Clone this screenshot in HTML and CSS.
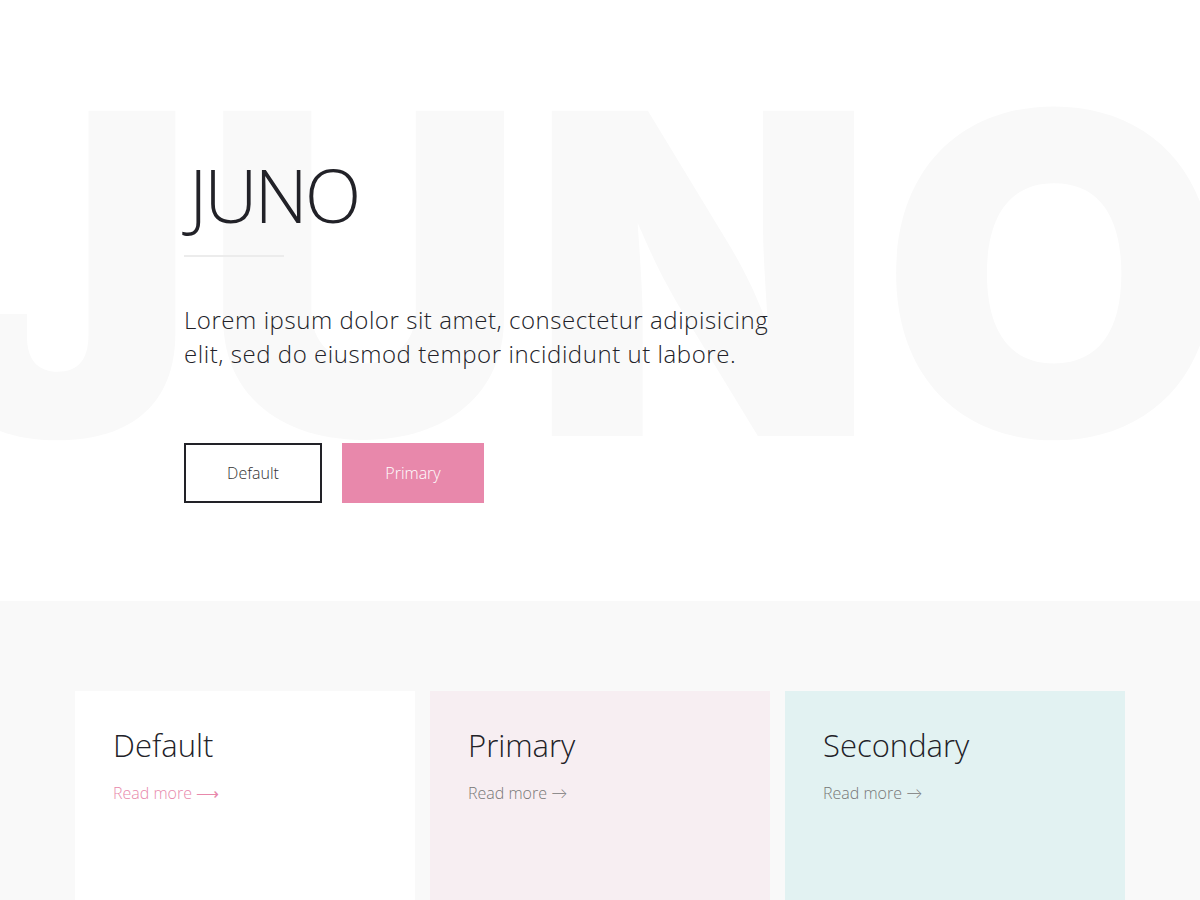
FILE: index.html
```html
<!DOCTYPE html>
<html lang="en">
<head>
<meta charset="utf-8">
<title>Juno</title>
<link rel="stylesheet" href="styles.css">
</head>
<body>
<section class="hero">
  <div class="hero-bg" aria-hidden="true">JUNO</div>
  <div class="hero-inner">
    <h1 class="hero-title">JUNO</h1>
    <hr class="hero-rule">
    <p class="hero-text">Lorem ipsum dolor sit amet, consectetur adipisicing elit, sed do eiusmod tempor incididunt ut labore.</p>
    <div class="hero-actions">
      <a class="btn btn-default" href="#">Default</a>
      <a class="btn btn-primary" href="#">Primary</a>
    </div>
  </div>
</section>
<section class="cards">
  <div class="cards-grid">
    <div class="card card-default">
      <h2 class="card-title">Default</h2>
      <a class="card-link" href="#">Read more <span class="arrow">&#x27F6;</span></a>
    </div>
    <div class="card card-primary">
      <h2 class="card-title">Primary</h2>
      <a class="card-link" href="#">Read more <span class="arrow">&rarr;</span></a>
    </div>
    <div class="card card-secondary">
      <h2 class="card-title">Secondary</h2>
      <a class="card-link" href="#">Read more <span class="arrow">&rarr;</span></a>
    </div>
  </div>
</section>
</body>
</html>
```
FILE: styles.css
```css
html, body {
  margin: 0;
  padding: 0;
}
body {
  font-family: "Open Sans", "Lato", sans-serif;
  font-weight: 300;
  color: #222228;
  background: #fff;
  overflow: hidden;
}
.hero {
  position: relative;
  height: 601px;
  overflow: hidden;
}
.hero-bg {
  position: absolute;
  left: -70px;
  top: 50px;
  font-family: "Inter", "Noto Sans", sans-serif;
  font-size: 447px;
  font-weight: 900;
  line-height: 1;
  color: #f9f9f9;
  white-space: nowrap;
  letter-spacing: 6px;
  z-index: 0;
}
.hero-inner {
  position: relative;
  z-index: 1;
  width: 832px;
  margin: 0 auto;
  padding-top: 150px;
}
.hero-title {
  margin: 0;
  font-size: 74px;
  font-weight: 300;
  line-height: 90px;
  letter-spacing: -3px;
  padding-left: 5px;
}
.hero-rule {
  width: 100px;
  height: 2px;
  border: 0;
  background: #ececec;
  margin: 15px 0 0 0;
}
.hero-text {
  margin: 46px 0 0 0;
  max-width: 600px;
  font-size: 24px;
  letter-spacing: 0.55px;
  line-height: 34px;
}
.hero-actions {
  display: flex;
  gap: 20px;
  margin-top: 72px;
}
.btn {
  display: flex;
  align-items: center;
  justify-content: center;
  height: 60px;
  box-sizing: border-box;
  font-size: 16px;
  text-decoration: none;
}
.btn-default {
  width: 138px;
  border: 2px solid #222228;
  color: #333;
}
.btn-primary {
  width: 142px;
  background: #e888ab;
  color: #fff;
}
.cards {
  background: #f9f9f9;
  height: 299px;
  padding-top: 90px;
  box-sizing: border-box;
}
.cards-grid {
  display: grid;
  grid-template-columns: repeat(3, 340px);
  gap: 15px;
  justify-content: center;
}
.card {
  height: 260px;
  padding: 34px 38px;
  box-sizing: border-box;
}
.card-default { background: #fff; }
.card-primary { background: #f7eef2; }
.card-secondary { background: #e2f2f2; }
.card-title {
  margin: 0;
  font-size: 31px;
  font-weight: 300;
  line-height: 40px;
}
.card-link {
  display: inline-block;
  margin-top: 17px;
  font-size: 16px;
  text-decoration: none;
  color: #777;
}
.card-default .card-link { color: #e888ab; }
.arrow { font-size: 16px; }
```
